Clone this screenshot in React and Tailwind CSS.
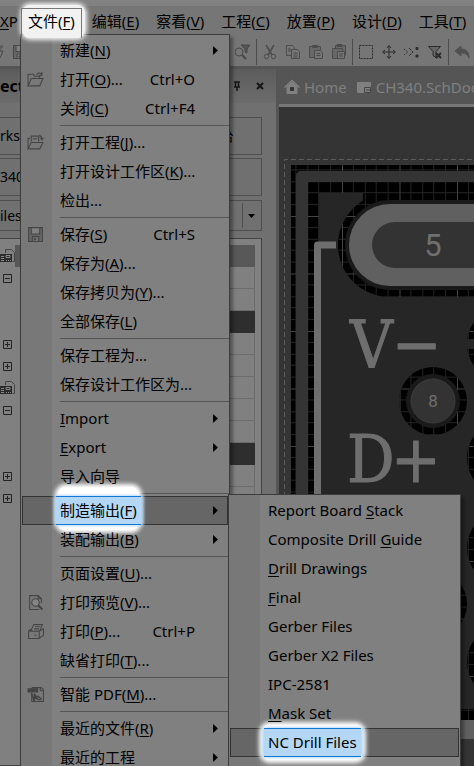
import React from "react";

const FONT = "font-['Noto_Sans','Noto_Sans_CJK_SC',sans-serif]";

/* Renders a label whose access key is written between underscores: "新建(_N_)". */
function Label({ text }) {
  const [before, key, after] = text.split("_");
  return (
    <>
      {before}
      {key && <span className="underline underline-offset-2">{key}</span>}
      {after}
    </>
  );
}

function Icon({ name, size = "size-4" }) {
  const shapes = {
    open: (
      <>
        <path d="M1 14V3h5l1 2h5v2M1 14l3-7h11l-3 7z" />
        <path d="M9 3.500c1-2 3-2 4.500-.5M14 1v3h-3" />
      </>
    ),
    project: (
      <>
        <path d="M1 14V4h2M1 14l3-6h11l-3 6zM4 7V2h6l1 1v4M5.500 4.500h4" />
        <path d="M11 1.500c2 0 3 1 3 3M12.500 3.500l1.500 2 1.500-2" />
      </>
    ),
    save: (
      <>
        <path d="M1.500 1.500h13v13h-13z" fill="#666" />
        <path d="M4 1.500h8v6H4z" fill="#808080" />
        <path d="M5 14v-4h6v4" fill="#777" />
        <path d="M7 12h1v1H7z" />
      </>
    ),
    preview: (
      <>
        <path d="M2.500 14.500V1.500h8l3 3v4M10.500 1.500v3h3M2.500 14.500h9" />
        <circle cx="8" cy="8" r="3.500" fill="#858585" />
        <path d="M10.500 10.500l4 4" strokeWidth="2" />
      </>
    ),
    print: (
      <>
        <path d="M1.500 7.500h10v7h-10zM11.500 14.500l4-3v-6l-4 2M1.500 7.500l3-2" />
        <path d="M3.500 7.500l3-6h8l-2.500 6z" fill="#808080" />
        <path d="M7.500 3.500h5M6.500 5.500h5M7 11.500h2" />
      </>
    ),
    pdf: (
      <>
        <path d="M4.500 6v8.500h11v-11l-2-2h-9M12.500 1.500v3h3" />
        <path d="M1 2.500h9v3H1z" fill="#444" />
        <path d="M4 7l3 7M7 7v7M8 12c3-5 3 0 6 0M8 8c0 5 3 5 5 5" strokeWidth="1.500" />
      </>
    ),
    searchFilter: (
      <>
        <circle cx="4" cy="8" r="4" />
        <path d="M7 11l4 4" strokeWidth="2" />
        <path d="M6 1h9l-3 4v4l-2-1V5z" fill="#555" />
      </>
    ),
    cut: (
      <>
        <path d="M4 1l6 10M12 1L6 11" strokeWidth="1.500" />
        <circle cx="4.500" cy="12.500" r="2.200" />
        <circle cx="11.500" cy="12.500" r="2.200" />
      </>
    ),
    copy: (
      <>
        <path d="M1.500 1.500h6l2 2v8h-8z" />
        <path d="M6.500 5.500h6l2 2v7h-8z" fill="#767676" />
        <path d="M3 5h3M3 7h3M8.500 9h4M8.500 11h4M8.500 13h4" />
      </>
    ),
    paste: (
      <>
        <path d="M1.500 2.500h11v11h-11z" fill="#686868" />
        <path d="M4.500 1.500h5v2h-5z" />
        <path d="M6.500 6.500h6l2 2v6h-8z" fill="#767676" />
        <path d="M8.500 9.500h4M8.500 11.500h4" />
      </>
    ),
    pasteMany: (
      <>
        <path d="M4.500 1.500h10v10h-10z" fill="#686868" />
        <path d="M1.500 4.500h10v10h-10z" fill="#686868" />
        <path d="M6 .5h5v2H6z" />
        <path d="M6.500 7.500h7v7h-7z" fill="#767676" />
        <path d="M8 10h4M8 12h4" />
      </>
    ),
    select: <path d="M1.500 1.500h13v13h-13z" strokeDasharray="2 1" />,
    move: <path d="M8 2v12M2 8h12M6 4l2-2.500L10 4M6 12l2 2.500 2-2.500M4 6L1.500 8 4 10M12 6l2.500 2-2.500 2" />,
    deselect: (
      <>
        <path d="M0 5l4 3-4 3" strokeDasharray="1.500 1.500" />
        <path d="M5 4l4 4-4 4" strokeDasharray="3 1" />
        <path d="M12 3.500h2v2h-2zM12 11h2v2h-2z" fill="currentColor" />
      </>
    ),
    clearFilter: (
      <>
        <path d="M1.500 2.500h12l-4.500 5v6l-3-2v-4z" fill="#666" />
        <path d="M9 9l5 5M14 9l-5 5" strokeWidth="2" />
      </>
    ),
    undo: <path d="M1 7l6-5v3c5 0 8 3 8 9-2-4-4-5-8-5v3z" fill="currentColor" />,
    home: (
      <>
        <path d="M3 8v6.500h10V8L8 3z" fill="#808080" />
        <path d="M.5 8.500L8 1.500l7.500 7" strokeWidth="1.500" />
        <path d="M6.500 8.500h3v3h-3z" stroke="#333" fill="#333" />
      </>
    ),
    sheet: (
      <>
        <path d="M1.500 3.500h13v10h-13z" fill="#808080" />
        <path d="M8.500 8.500h6v5h-6zM10 11h4" stroke="#444" />
      </>
    ),
    board: (
      <>
        <path d="M5.500 5V1.500h6l3 3v9h-2" />
        <path d="M0 6h12v8H0z" fill="#2a2a2a" stroke="none" />
        <path d="M1 8.500h3M1 10.500h3M1 12.500h3M6 7.500h4v2H6zM6.500 12v1M8.500 12v1M10.500 12v1" stroke="#888" />
      </>
    ),
  };
  return (
    <svg viewBox="0 0 16 16" className={`${size} shrink-0`} fill="none" stroke="currentColor" strokeWidth="1" aria-hidden="true">
      {shapes[name]}
    </svg>
  );
}

const MENU_BAR = ["编辑(_E_)", "察看(_V_)", "工程(_C_)", "放置(_P_)", "设计(_D_)", "工具(_T_)"];

function MenuBar() {
  return (
    <nav className="flex h-7 items-start gap-[17px] bg-[#767676] text-[15px] leading-[30px] whitespace-nowrap text-black">
      <button className="-mr-[5px] w-4 shrink-0 text-left">
        <Label text="_X_P" />
      </button>
      <button className="relative z-30 shrink-0">
        <span className="absolute -top-px -right-[10px] -bottom-[2px] -left-[6px] rounded-lg bg-[#f2f2f2] shadow-[0_0_4px_2px_#f2f2f2]" />
        <span className="absolute -inset-x-[7px] top-[2px] -bottom-[2px] border border-b-0 border-[#777]" />
        <span className="relative">
          <Label text="文件(_F_)" />
        </span>
      </button>
      {MENU_BAR.map((text) => (
        <button key={text} className="shrink-0">
          <Label text={text} />
        </button>
      ))}
    </nav>
  );
}

function Divider() {
  return <span className="h-[26px] w-px shrink-0 bg-[#4c4c4c]" />;
}

function ToolBar() {
  return (
    <div className="flex h-8 items-center justify-between bg-[#767676] pt-1 text-[#484848]">
      <div className="flex gap-2">
        <span className="-ml-3 flex">
          <Icon name="open" />
        </span>
        <Icon name="save" />
      </div>
      <div className="mr-1 flex shrink-0 items-center gap-[5px]">
        <Icon name="searchFilter" />
        <Divider />
        <span className="flex gap-[7px] text-[#4c4c4c]">
          <Icon name="cut" />
          <Icon name="copy" />
          <Icon name="paste" />
          <Icon name="pasteMany" />
        </span>
        <Divider />
        <span className="flex gap-[7px] text-[#2c2c2c]">
          <Icon name="select" />
          <Icon name="move" />
          <Icon name="deselect" />
          <Icon name="clearFilter" />
        </span>
        <Divider />
        <span className="text-[#505050]">
          <Icon name="undo" />
        </span>
      </div>
    </div>
  );
}

const TREE = ["board", "minus", "", "dark", "plus", "plus", "board", "minus", "", "dark", "plus", "plus", "", ""];

function ExpandBox({ open }) {
  return (
    <svg viewBox="0 0 9 9" className="ml-[3px] size-[9px] shrink-0" fill="none" stroke="#222" aria-hidden="true">
      <path d={open ? "M.5.5h8v8h-8zM2 4.500h5" : "M.5.5h8v8h-8zM2 4.500h5M4.500 2v5"} />
    </svg>
  );
}

function ProjectsPanel() {
  return (
    <aside className="flex w-[276px] shrink-0 flex-col bg-[#707070] text-sm text-black">
      <header className="flex h-[34px] shrink-0 items-center bg-linear-to-b from-[#5c5c5c] to-[#6c6c6c]">
        <h2 className="flex-1 text-base font-bold">ects</h2>
        <svg viewBox="0 0 34 12" className="mr-[9px] h-3 w-[34px]" fill="none" stroke="#161616" aria-hidden="true">
          <path d="M1 2h6M2.500 2v5M5.500 2v5M1 7h6M4 7v4" strokeWidth="1.500" />
          <path d="M24 3l6 6M30 3l-6 6" strokeWidth="2" />
        </svg>
      </header>
      <div className="mt-[14px] mr-[14px] flex h-[38px] shrink-0 items-center justify-between border border-l-0 border-[#4f4f4f]">
        <span>rkspace</span>
        <span className="mr-[27px]">台</span>
      </div>
      <div className="mt-[3px] mr-[14px] flex h-[38px] shrink-0 items-center border border-l-0 border-[#4f4f4f]">340</div>
      <div className="mt-1 mr-[14px] flex h-[31px] shrink-0 items-center justify-between border border-l-0 border-[#4f4f4f]">
        <span>iles</span>
        <span className="flex h-[25px] items-center border-l border-[#4f4f4f] pr-[6px] pl-[5px]">
          <svg viewBox="0 0 7 4" className="h-1 w-[7px]" aria-hidden="true">
            <path d="M0 0h7L3.500 4z" />
          </svg>
        </span>
      </div>
      <div className="mt-[7px] mr-[14px] flex-1 overflow-hidden border border-l-0 border-[#444] bg-[#808080] pt-[6px]">
        {TREE.map((kind, i) => (
          <div key={i} className="flex h-[22px] items-center">
            {kind === "board" && (
              <span className="flex w-[15px] shrink-0 text-[#444]">
                <Icon name="board" />
              </span>
            )}
            {kind === "minus" && <ExpandBox open />}
            {kind === "plus" && <ExpandBox />}
            <span
              className={
                i === 0
                  ? "mr-[6px] h-[22px] flex-1 bg-[#585858] pl-[2px]"
                  : kind === "dark"
                    ? "mr-[6px] ml-10 h-[22px] flex-1 bg-[#2e2e2e]"
                    : "mr-[6px] ml-10 h-[22px] flex-1 border-r border-b border-[#6c6c6c]"
              }
            />
          </div>
        ))}
      </div>
    </aside>
  );
}

function PinHole({ cx, cy, r }) {
  return (
    <>
      <circle cx={cx} cy={cy} r={r} fill="#000" />
      <circle cx={cx} cy={cy} r={r} fill="url(#grid)" />
    </>
  );
}

function Board() {
  return (
    <svg viewBox="279 107 195 659" preserveAspectRatio="xMinYMin slice" className="min-h-0 w-full flex-1 bg-[#343434]" role="img" aria-label="PCB">
      <defs>
        <pattern id="grid" x="342" y="216" width="57.500" height="57.500" patternUnits="userSpaceOnUse">
          <path
            d="M11.500 0v57.500M23.500 0v57.500M34.500 0v57.500M46.500 0v57.500M0 11.500h57.500M0 23.500h57.500M0 34.500h57.500M0 46.500h57.500"
            stroke="#242424"
            shapeRendering="crispEdges"
          />
          <path d="M.5 0v57.500M0 .5h57.500" stroke="#444" shapeRendering="crispEdges" />
        </pattern>
      </defs>
      <path d="M600 159.500H284.500V800" fill="none" stroke="#5c5c5c" strokeDasharray="5 3" />
      <path d="M291 165h190v555H291z" fill="#000" />
      <path d="M291 165h190v555H291z" fill="url(#grid)" />
      <path d="M296 716V174l3-3h180v11H308v534z" fill="#343434" />
      <path d="M319 193h44v50h120v466H319z" fill="#262626" />
      <rect x="338" y="193" width="200" height="104" rx="52" fill="#000" />
      <rect x="338" y="193" width="200" height="104" rx="52" fill="url(#grid)" />
      <rect x="345" y="200" width="200" height="90" rx="45" fill="#1a1a1a" />
      <rect x="349" y="204" width="200" height="82" rx="41" fill="#606060" />
      <rect x="372" y="222" width="150" height="46" rx="23" fill="#333" />
      <path d="M336 245H317.500V709" fill="none" stroke="#6e6e6e" strokeWidth="7" strokeLinejoin="round" />
      <PinHole cx={505} cy={344} r={38} />
      <path d="M460 339h20v10h-20z" fill="#262626" />
      <PinHole cx={505} cy={458} r={38} />
      <PinHole cx={505} cy={548} r={38} />
      <PinHole cx={433} cy={604} r={34} />
      <PinHole cx={505} cy={662} r={38} />
      <PinHole cx={433} cy={401} r={34} />
      <circle cx="433" cy="401" r="27" fill="#1a1a1a" />
      <circle cx="433" cy="401" r="22" fill="#333" stroke="#3c3c3c" />
      <path d="M291 720h190v19H291z" fill="#606060" />
      <path d="M291 739h190v40H291z" fill="#343434" />
      <g fill="#707070" className="font-[Roboto,sans-serif]">
        <text x="433" y="256" fontSize="31" textAnchor="middle">5</text>
        <text x="433" y="407" fontSize="17" textAnchor="middle">8</text>
      </g>
      <g fill="#6e6e6e" stroke="#6e6e6e" strokeWidth="1" strokeLinejoin="round" fontSize="66" className="font-['DejaVu_Serif_Condensed','DejaVu_Serif',serif]">
        <text x="350" y="367">V</text>
        <text x="392" y="367">−</text>
        <text x="347" y="482">D</text>
        <text x="391" y="482">+</text>
      </g>
    </svg>
  );
}

function Editor() {
  return (
    <main className="ml-[3px] flex min-w-0 flex-1 flex-col">
      <div className="-mt-[3px] flex h-[38px] shrink-0 items-center gap-1 overflow-hidden pt-1 pl-[5px] text-[15px] whitespace-nowrap text-[#808080]">
        <Icon name="home" />
        <a href="#home">Home</a>
        <span className="ml-[5px] flex">
          <Icon name="sheet" />
        </span>
        <a href="#sch">CH340.SchDoc</a>
      </div>
      <div className="h-[3px] shrink-0 bg-[#777]" />
      <Board />
    </main>
  );
}

const FILE_MENU = [
  { text: "新建(_N_)", sub: true },
  { text: "打开(_O_)...", keys: "Ctrl+O", icon: "open" },
  { text: "关闭(_C_)", keys: "Ctrl+F4" },
  null,
  { text: "打开工程(_J_)...", icon: "project" },
  { text: "打开设计工作区(_K_)..." },
  { text: "检出..." },
  null,
  { text: "保存(_S_)", keys: "Ctrl+S", icon: "save" },
  { text: "保存为(_A_)..." },
  { text: "保存拷贝为(_Y_)..." },
  { text: "全部保存(_L_)" },
  null,
  { text: "保存工程为..." },
  { text: "保存设计工作区为..." },
  null,
  { text: "_I_mport", sub: true },
  { text: "_E_xport", sub: true },
  { text: "导入向导" },
  null,
  { text: "制造输出(_F_)", sub: true, glow: "-inset-x-[2px] -top-[12px] -bottom-[8px]" },
  { text: "装配输出(_B_)", sub: true },
  null,
  { text: "页面设置(_U_)..." },
  { text: "打印预览(_V_)...", icon: "preview" },
  { text: "打印(_P_)...", keys: "Ctrl+P", icon: "print" },
  { text: "缺省打印(_T_)..." },
  null,
  { text: "智能 PDF(_M_)...", icon: "pdf" },
  null,
  { text: "最近的文件(_R_)", sub: true },
  { text: "最近的工程", sub: true },
];

const OUTPUT_MENU = [
  { text: "Report Board _S_tack" },
  { text: "Composite Drill _G_uide" },
  { text: "_D_rill Drawings" },
  { text: "_F_inal" },
  { text: "Gerber Files" },
  { text: "Gerber X2 Files" },
  { text: "IPC-2581" },
  { text: "_M_ask Set" },
  { text: "NC Drill Files", glow: "-inset-x-[6px] -top-[6px] -bottom-[6px]" },
  { text: "ODB++ Files" },
];

function MenuItem({ item }) {
  return (
    <button
      role="menuitem"
      className={`mx-px flex h-[29px] items-center border text-left whitespace-nowrap ${item.glow ? "border-[#333] bg-[#666]" : "border-transparent"}`}
    >
      <span className="flex w-[37px] shrink-0 pl-1 text-[#444]">{item.icon && <Icon name={item.icon} size="size-[17px]" />}</span>
      <span className="relative">
        {item.glow && (
          <>
            <span className={`absolute rounded-lg bg-white shadow-[0_0_4px_3px_white] ${item.glow}`} />
            <span className="absolute -inset-x-1 -top-[3px] -bottom-[3px] border-y border-[#0f78d4] bg-[#b3d7f5] shadow-[-2px_0_3px_#b3d7f5,2px_0_3px_#b3d7f5]" />
          </>
        )}
        <span className="relative z-10 block leading-[23px]">
          <Label text={item.text} />
        </span>
      </span>
      <span className="flex-1 pr-[32px] text-right">{item.keys}</span>
      {item.sub && (
        <svg viewBox="0 0 5 9" className="mr-[9px] h-[9px] w-[5px] shrink-0" aria-hidden="true">
          <path d="M0 0l5 4.500L0 9z" />
        </svg>
      )}
    </button>
  );
}

function Menu({ items, place, label }) {
  return (
    <div
      role="menu"
      aria-label={label}
      className={`absolute flex flex-col border border-[#3c3c3c] bg-linear-to-r from-[#787878] from-[31px] to-[#808080] to-[31px] pt-px text-[15px] text-black shadow-[3px_3px_3px_rgba(0,0,0,0.35)] ${place}`}
    >
      {items.map((item, i) =>
        item ? <MenuItem key={i} item={item} /> : <hr key={i} className="my-[2px] ml-[39px] border-[#555]" />
      )}
    </div>
  );
}

export default function App() {
  return (
    <div className={`relative flex h-screen flex-col overflow-hidden bg-[#555] ${FONT}`}>
      <div className="h-[6px] shrink-0 bg-[#828282]" />
      <MenuBar />
      <ToolBar />
      <div className="mt-[3px] flex min-h-0 flex-1">
        <ProjectsPanel />
        <Editor />
      </div>
      <Menu items={FILE_MENU} place="left-5 top-[34px] z-10 w-[210px]" label="文件" />
      <Menu items={OUTPUT_MENU} place="left-[228px] top-[494px] z-20 w-[233px]" label="制造输出" />
    </div>
  );
}
